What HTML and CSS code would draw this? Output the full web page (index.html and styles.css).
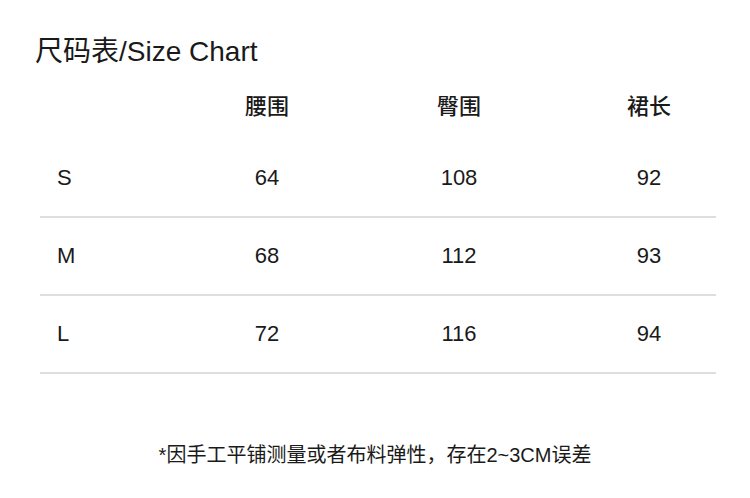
FILE: index.html
```html
<!DOCTYPE html>
<html lang="zh">
<head>
<meta charset="utf-8">
<link rel="stylesheet" href="styles.css">
</head>
<body>
<div class="page">
  <h1 class="title">尺码表/Size Chart</h1>
  <div class="table">
    <div class="row head">
      <div class="cell label"></div>
      <div class="cell">腰围</div>
      <div class="cell">臀围</div>
      <div class="cell last">裙长</div>
    </div>
    <div class="row">
      <div class="cell label">S</div>
      <div class="cell">64</div>
      <div class="cell">108</div>
      <div class="cell last">92</div>
    </div>
    <div class="row">
      <div class="cell label">M</div>
      <div class="cell">68</div>
      <div class="cell">112</div>
      <div class="cell last">93</div>
    </div>
    <div class="row">
      <div class="cell label">L</div>
      <div class="cell">72</div>
      <div class="cell">116</div>
      <div class="cell last">94</div>
    </div>
  </div>
  <p class="note">*因手工平铺测量或者布料弹性，存在2~3CM误差</p>
</div>
</body>
</html>
```

FILE: styles.css
```css
html, body {
  margin: 0;
  padding: 0;
  background: #ffffff;
}
body {
  font-family: "Liberation Sans", "Noto Sans CJK SC", sans-serif;
  color: #1a1a1a;
}
.page {
  width: 750px;
  height: 498px;
  padding: 36px 34px 0 40px;
  box-sizing: border-box;
  overflow: hidden;
}
.title {
  margin: 0 0 0 -5px;
  font-size: 28px;
  line-height: 32px;
  font-weight: normal;
}
.table {
  display: flex;
  flex-direction: column;
}
.row {
  display: grid;
  grid-template-columns: 132px 190px 194px 160px;
  align-items: center;
  height: 76px;
  border-bottom: 2px solid #dedede;
  font-size: 22px;
}
.row.head {
  height: 72px;
  border-bottom: none;
  font-weight: 500;
}
.cell {
  text-align: center;
}
.cell.label {
  text-align: left;
  padding-left: 17px;
}
.cell.last {
  padding-left: 26px;
}
.note {
  margin: 69px 0 0 -6px;
  text-align: center;
  font-size: 20px;
  line-height: 24px;
}
```
